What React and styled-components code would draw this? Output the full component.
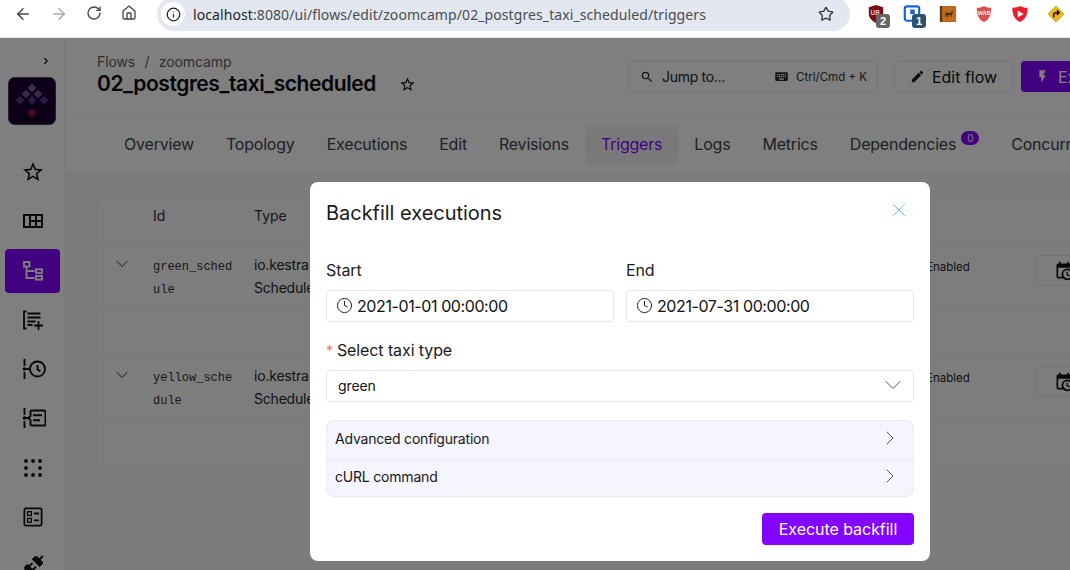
import React from "react";
import styled, { createGlobalStyle } from "styled-components";
import { ArrowLeft, ArrowRight, RotateCw, House, Info, Star, Clock, X, ChevronDown, ChevronRight } from "lucide-react";

const sans = `"Inter", "Liberation Sans", sans-serif`;

const Mdi = ({ d, size = 24, color = "currentColor" }) => (
  <svg width={size} height={size} viewBox="0 0 24 24" fill={color}>
    <path d={d} />
  </svg>
);

const paths = {
  star: "M12,15.39L8.24,17.66L9.23,13.38L5.91,10.5L10.29,10.13L12,6.09L13.71,10.13L18.09,10.5L14.77,13.38L15.76,17.66M22,9.24L14.81,8.63L12,2L9.19,8.63L2,9.24L7.45,13.97L5.82,21L12,17.27L18.18,21L16.54,13.97L22,9.24Z",
  pencil: "M20.71,7.04C21.1,6.65 21.1,6 20.71,5.63L18.37,3.29C18,2.9 17.35,2.9 16.96,3.29L15.12,5.12L18.87,8.87M3,17.25V21H6.75L17.81,9.93L14.06,6.18L3,17.25Z",
  magnify: "M9.5,3A6.5,6.5 0 0,1 16,9.5C16,11.11 15.41,12.59 14.44,13.73L14.71,14H15.5L20.5,19L19,20.5L14,15.5V14.71L13.73,14.44C12.59,15.41 11.11,16 9.5,16A6.5,6.5 0 0,1 3,9.5A6.5,6.5 0 0,1 9.5,3M9.5,5C7,5 5,7 5,9.5C5,12 7,14 9.5,14C12,14 14,12 14,9.5C14,7 12,5 9.5,5Z",
  keyboard: "M19,10H17V8H19M19,13H17V11H19M16,10H14V8H16M16,13H14V11H16M16,17H8V15H16M7,10H5V8H7M7,13H5V11H7M8,11H10V13H8M8,8H10V10H8M11,11H13V13H11M11,8H13V10H11M20,5H4C2.89,5 2,5.89 2,7V17A2,2 0 0,0 4,19H20A2,2 0 0,0 22,17V7C22,5.89 21.1,5 20,5Z",
  flash: "M7,2V13H10V22L17,10H13L17,2H7Z",
  calendarClock: "M15,13H16.5V15.82L18.94,17.23L18.19,18.53L15,16.69V13M19,8H5V19H9.67C9.24,18.09 9,17.07 9,16A7,7 0 0,1 16,9C17.07,9 18.09,9.24 19,9.67V8M5,21C3.89,21 3,20.1 3,19V5C3,3.89 3.89,3 5,3H6V1H8V3H16V1H18V3H19A2,2 0 0,1 21,5V11.1C22.24,12.36 23,14.09 23,16A7,7 0 0,1 16,23C14.09,23 12.36,22.24 11.1,21H5M16,11.15A4.85,4.85 0 0,0 11.15,16C11.15,18.68 13.32,20.85 16,20.85A4.85,4.85 0 0,0 20.85,16C20.85,13.32 18.68,11.15 16,11.15Z",
};

const DashboardIcon = () => (
  <svg width="20" height="14" viewBox="0 0 20 14" fill="currentColor">
    <path fillRule="evenodd" d="M0 0h20v14H0zM2 2v10h4V2zM8 2v4h4V2zM8 8v4h4V8zM14 2v4h4V2zM14 8v4h4V8z" />
    <rect x="9" y="6" width="2" height="2" />
  </svg>
);

const TreeIcon = () => (
  <svg width="20" height="20" viewBox="0 0 20 20" fill="none" stroke="currentColor" strokeWidth="1.9">
    <rect x="1" y="1" width="5.5" height="4.5" />
    <rect x="13" y="8.3" width="6" height="3.6" />
    <rect x="13" y="15" width="6" height="3.6" />
    <path d="M3.5 6v11h8M3.5 10h8" />
  </svg>
);

const ListPlusIcon = () => (
  <svg width="20" height="20" viewBox="0 0 20 20" fill="none" stroke="currentColor" strokeWidth="1.8">
    <path d="M3.5 18.5H1V1.5h2.5M4.5 3.5h13M4.5 7.5h13M4.5 11.5h8M4.5 15h5M15.5 11v9M11 15.5h9" />
  </svg>
);

const TimelineClockIcon = () => (
  <svg width="26" height="26" viewBox="0 0 26 26" fill="none" stroke="currentColor" strokeWidth="1.9">
    <path d="M4.5 3v7M4.5 16v7" />
    <circle cx="4.5" cy="13" r="1.8" fill="currentColor" stroke="none" />
    <path d="M6 13h3" />
    <circle cx="17.5" cy="13" r="7.5" />
    <path d="M17.5 9v4.4l3 2" />
  </svg>
);

const TimelineTextIcon = () => (
  <svg width="26" height="26" viewBox="0 0 26 26" fill="none" stroke="currentColor" strokeWidth="1.9">
    <path d="M4.5 3v7M4.5 16v7" />
    <circle cx="4.5" cy="13" r="1.8" fill="currentColor" stroke="none" />
    <path d="M6 13h2.5l2-2V6.5a1 1 0 0 1 1-1h13a1 1 0 0 1 1 1V19.5a1 1 0 0 1-1 1h-13a1 1 0 0 1-1-1V15l-2-2" />
    <path d="M13 10.2h9M13 15.2h7" />
  </svg>
);

const DotsIcon = () => (
  <svg width="24" height="24" viewBox="0 0 24 24" fill="currentColor">
    {[5, 12, 19].flatMap((y) => [5, 12, 19].map((x) => (x === 12 && y === 12 ? null : <circle key={`${x}-${y}`} cx={x} cy={y} r="1.9" />)))}
  </svg>
);

const BallotIcon = () => (
  <svg width="24" height="24" viewBox="0 0 24 24" fill="none" stroke="currentColor" strokeWidth="1.8">
    <rect x="3.4" y="3.4" width="17.2" height="17.2" rx="1.4" />
    <rect x="6.6" y="6.6" width="3.8" height="3.8" strokeWidth="1.3" />
    <rect x="6.6" y="13.4" width="3.8" height="3.8" strokeWidth="1.3" />
    <path d="M13 8.5h5M13 15.3h5" />
  </svg>
);

const ConnectionIcon = () => (
  <svg width="24" height="24" viewBox="0 0 24 24" fill="currentColor">
    <path d="M21.4 7.5c.8.8.8 2.1 0 2.8l-2.8 2.8-7.8-7.8 2.8-2.8c.7-.8 2-.8 2.8 0l1.8 1.8 3-3 1.4 1.4-3 3 1.8 1.8zm-5.8 5.8-1.4-1.4-2.8 2.8-2.1-2.1 2.8-2.8-1.4-1.4-2.8 2.8-1.5-1.4-2.8 2.8c-.8.8-.8 2.1 0 2.8l1.8 1.8-4 4 1.4 1.4 4-4 1.8 1.8c.8.8 2 .8 2.8 0l2.8-2.8-1.4-1.4 2.8-2.8z" />
  </svg>
);

const Logo = () => (
  <svg width="48" height="48" viewBox="0 0 48 48">
    <rect x="0.5" y="0.5" width="47" height="47" rx="6" fill="#17002f" stroke="#4a3b5c" />
    <path d="M24 6.5l4.5 4.5-4.5 4.5-4.5-4.5z" fill="#7b5f95" />
    <path d="M18 12.5l4.5 4.5-4.5 4.5-4.5-4.5zM30 12.5l4.5 4.5-4.5 4.5-4.5-4.5z" fill="#6f4b98" />
    <path d="M12 19l4.3 4.3-4.3 4.3-4.3-4.3zM24 19l4.3 4.3-4.3 4.3-4.3-4.3zM36 19l4.3 4.3-4.3 4.3-4.3-4.3z" fill="#5f3392" />
    <circle cx="24" cy="36" r="3.8" fill="#8f1c46" />
  </svg>
);

const UBlockIcon = () => (
  <svg width="18" height="18" viewBox="0 0 20 20">
    <path d="M10 0l8 2.4v7c0 5-3.4 8-8 10.6-4.6-2.6-8-5.6-8-10.6v-7z" fill="#7b0d14" />
    <text x="4" y="11" fontSize="7" fontWeight="700" fill="#e9d0d0" fontFamily="Liberation Sans">UB</text>
  </svg>
);

const BitIcon = () => (
  <svg width="18" height="18" viewBox="0 0 20 20" fill="none">
    <rect x="2" y="1.5" width="16" height="16" rx="2.5" stroke="#1a5fe0" strokeWidth="2.4" />
    <rect x="8" y="5" width="5" height="5" fill="#1a5fe0" />
  </svg>
);

const BookIcon = () => (
  <svg width="18" height="18" viewBox="0 0 20 20">
    <rect x="1" y="1" width="18" height="18" rx="1" fill="#bd6c1f" />
    <rect x="1" y="1" width="2.5" height="18" fill="#5b3a18" />
    <path d="M7 13V9l2-1 1 1h3l1-2h1l.5 2-1 1v3h-1v-2h-3v2H9v-2l-1 .5V13z" fill="#4f2c0c" />
  </svg>
);

const WabIcon = () => (
  <svg width="18" height="18" viewBox="0 0 20 20">
    <path d="M10 1c2.5 1.5 5 2 8 2 0 7-1.5 13-8 16-6.5-3-8-9-8-16 3 0 5.5-.5 8-2z" fill="#d9504f" />
    <text x="10" y="11.5" fontSize="6" fontWeight="700" textAnchor="middle" fill="#fbe9e9" fontFamily="Liberation Sans">WAB</text>
  </svg>
);

const PlayShieldIcon = () => (
  <svg width="18" height="18" viewBox="0 0 20 20">
    <path d="M10 1c2.5 1.500 5.500 2 8.500 2 0 8-2.500 13-8.500 16-6-3-8.500-8-8.500-16 3 0 6-.5 8.500-2z" fill="#ef1c2d" />
    <path d="M7.5 6l6.5 4-6.500 4z" fill="#fff" />
  </svg>
);

const RoadSignIcon = () => (
  <svg width="18" height="18" viewBox="0 0 20 20">
    <path d="M10 1l9 9-9 9-9-9z" fill="#f3b61f" stroke="#a97a0b" strokeWidth="0.6" />
    <path d="M7.5 14v-3.500c0-1.500 1-2 2.500-2h2M11 6l2.500 2.500L11 11" fill="none" stroke="#1b1203" strokeWidth="1.7" />
  </svg>
);

const GlobalStyle = createGlobalStyle`
  html, body {
    margin: 0;
    height: 100%;
    overflow: hidden;
    background: #fff;
  }
  * {
    box-sizing: border-box;
  }
`;

const Page = styled.div`
  position: relative;
  width: 1070px;
  height: 570px;
  overflow: hidden;
  font-family: ${sans};
  display: flex;
  flex-direction: column;
`;

const BrowserBar = styled.div`
  height: 38px;
  flex: none;
  display: flex;
  overflow: hidden;
  background: #fff;
  border-bottom: 1px solid #e8eaed;
`;

const NavButtons = styled.div`
  width: 157px;
  flex: none;
  display: flex;
  padding: 5px 0 0 14px;
  color: #474747;
`;

const NavButton = styled.span`
  width: 36px;
  height: 20px;
  display: flex;
  color: ${(props) => (props.$off ? "#a9abae" : "#474747")};
`;

const Omnibox = styled.div`
  width: 693px;
  height: 34px;
  margin-top: -3px;
  flex: none;
  display: flex;
  align-items: center;
  background: #e3e7ef;
  border-radius: 17px;
  padding: 0 16px 0 4px;
`;

const InfoBubble = styled.span`
  width: 24px;
  height: 24px;
  flex: none;
  display: flex;
  align-items: center;
  justify-content: center;
  border-radius: 50%;
  background: #fff;
  color: #1f1f1f;
`;

const Url = styled.div`
  flex: 1;
  margin-left: 8px;
  font: 14px "Noto Sans", sans-serif;
  letter-spacing: 0.09px;
  color: #4a4d51;
  white-space: nowrap;
  b {
    font-weight: 400;
    color: #1f1f1f;
  }
`;

const Extensions = styled.div`
  display: flex;
  padding-left: 8px;
`;

const Extension = styled.span`
  position: relative;
  width: 36px;
  height: 30px;
  padding-top: 5px;
  display: flex;
  justify-content: center;
`;

const ExtBadge = styled.span`
  position: absolute;
  top: 14px;
  left: 18px;
  width: 14px;
  height: 14px;
  border-radius: 3px;
  background: ${(props) => props.$bg};
  color: #fff;
  font: 700 11px/14px "Liberation Sans", sans-serif;
  text-align: center;
`;

const Body = styled.div`
  flex: 1;
  display: flex;
  min-height: 0;
`;

const Sidebar = styled.aside`
  width: 65px;
  flex: none;
  background: #fff;
  border-right: 1px solid #f0f0f2;
  padding: 12px 4px 0 5px;
  overflow: hidden;
`;

const Collapse = styled.div`
  height: 15px;
  padding-left: 36px;
  color: #111;
`;

const LogoWrap = styled.div`
  margin: 12px 0 0 3px;
  height: 48px;
`;

const SideNav = styled.nav`
  display: flex;
  flex-direction: column;
  gap: 5.3px;
  margin-top: 25px;
`;

const SideItem = styled.div`
  width: 55px;
  height: 44px;
  flex: none;
  display: flex;
  align-items: center;
  justify-content: center;
  border-radius: 4px;
  background: ${(props) => (props.$active ? "#8405ff" : "transparent")};
  color: ${(props) => (props.$active ? "#fff" : "#111")};
`;

const Main = styled.main`
  flex: 1;
  min-width: 0;
  display: flex;
  flex-direction: column;
  background: #f9f9fb;
`;

const Header = styled.header`
  height: 79px;
  flex: none;
  display: flex;
  padding: 15px 0 0 32px;
  background: #fff;
  border-bottom: 1px solid #f0f0f2;
`;

const TitleBlock = styled.div`
  width: 531px;
  flex: none;
`;

const Crumbs = styled.div`
  font-size: 14px;
  line-height: 18px;
  color: #5f5f64;
  letter-spacing: -0.1px;
  word-spacing: 5.5px;
`;

const TitleRow = styled.div`
  display: flex;
  align-items: center;
  gap: 23px;
  margin-top: -1px;
`;

const Title = styled.h1`
  margin: 0;
  font-size: 21px;
  line-height: 28px;
  font-weight: 600;
  color: #0a0a0a;
  letter-spacing: -0.42px;
`;

const Actions = styled.div`
  display: flex;
  flex: none;
  height: 31px;
  margin-top: 8px;
`;

const JumpBox = styled.div`
  width: 250px;
  display: flex;
  align-items: center;
  padding: 0 10px 0 11px;
  border: 1px solid #eaeaee;
  border-radius: 4px;
  color: #27272a;
  font-size: 14px;
  letter-spacing: -0.3px;
`;

const JumpText = styled.span`
  margin-left: 8px;
  flex: 1;
`;

const Keys = styled.span`
  margin-left: 7px;
  font-size: 11.5px;
  letter-spacing: 0;
  color: #333;
`;

const EditButton = styled.div`
  margin-left: 16px;
  width: 119px;
  display: flex;
  align-items: center;
  justify-content: center;
  gap: 7px;
  border: 1px solid #eaeaee;
  border-radius: 4px;
  font-size: 16px;
  color: #111;
`;

const ExecuteButton = styled.div`
  margin-left: 8px;
  width: 110px;
  flex: none;
  display: flex;
  align-items: center;
  gap: 8px;
  padding-left: 14px;
  border-radius: 4px;
  background: #8405ff;
  color: #fff;
  font-size: 16px;
`;

const Tabs = styled.div`
  height: 56px;
  flex: none;
  display: flex;
  padding: 8px 0 0 43px;
  background: #fff;
  border-bottom: 1px solid #f0f0f2;
  white-space: nowrap;
`;

const Tab = styled.div`
  height: 40px;
  flex: none;
  display: flex;
  align-items: center;
  padding: 0 16px 3px;
  border-radius: 6px;
  font-size: 16px;
  letter-spacing: -0.2px;
  color: ${(props) => (props.$active ? "#8405ff" : "#424247")};
  background: ${(props) => (props.$active ? "#f3f3f5" : "transparent")};
`;

const CountBadge = styled.span`
  width: 18px;
  height: 14px;
  margin: -11px 0 0 5px;
  border-radius: 8px;
  background: #8405ff;
  color: #fff;
  font-size: 10px;
  line-height: 14px;
  text-align: center;
`;

const Content = styled.div`
  flex: 1;
  padding: 23px 0 0 32px;
`;

const Table = styled.div`
  width: 1100px;
  height: 274px;
  border: 1px solid #f0f0f2;
  border-radius: 8px;
  background: #fafafc;
`;

const HeaderRow = styled.div`
  height: 50px;
  display: grid;
  grid-template-columns: 55px 101px 672px 110px 1fr;
  padding-top: 10px;
  border-bottom: 1px solid #eeeef0;
  font-size: 14px;
  color: #333;
`;

const Row = styled.div`
  height: 62px;
  display: grid;
  grid-template-columns: 55px 101px 672px 110px 1fr;
  padding-top: 8px;
  border-bottom: 1px solid #eeeef0;
`;

const Spacer = styled.div`
  height: 49px;
  border-bottom: ${(props) => (props.$last ? "none" : "1px solid #eeeef0")};
`;

const Chevron = styled.div`
  padding-left: 14px;
  height: 20px;
  margin-top: -1px;
  color: #333;
`;

const IdCell = styled.div`
  width: 84px;
  padding-top: 1px;
  font: 12px/23px "Liberation Mono", monospace;
  color: #333;
  word-break: break-all;
`;

const TypeCell = styled.div`
  width: 56px;
  margin-top: -2px;
  overflow: hidden;
  font-size: 14px;
  line-height: 23px;
  color: #27272a;
  white-space: nowrap;
  letter-spacing: -0.2px;
`;

const StateCell = styled.div`
  font-size: 11.5px;
  line-height: 23px;
  padding-top: 1px;
  color: #222;
`;

const CalendarButton = styled.div`
  width: 64px;
  height: 31px;
  display: flex;
  align-items: center;
  padding-left: 17px;
  border: 1px solid #eaeaee;
  border-radius: 4px;
  color: #111;
`;

const Overlay = styled.div`
  position: absolute;
  inset: 38px 0 0 0;
  padding: 144px 0 0 310px;
  background: rgba(0, 0, 0, 0.5);
`;

const Modal = styled.div`
  width: 620px;
  height: 379px;
  padding: 16px;
  background: #fff;
  border-radius: 8px;
  color: #111;
`;

const ModalHead = styled.div`
  height: 30px;
  display: flex;
  align-items: center;
  justify-content: space-between;
  padding-right: 4px;
`;

const ModalTitle = styled.h2`
  margin: 0;
  font-size: 20px;
  font-weight: 400;
  letter-spacing: -0.03px;
  color: #1a1a1c;
`;

const CloseIcon = styled.span`
  display: flex;
  margin-top: -6px;
  color: #4fbdf0;
`;

const DateGrid = styled.div`
  display: grid;
  grid-template-columns: 288px 288px;
  gap: 12px;
  margin-top: 30px;
`;

const Label = styled.label`
  display: block;
  height: 32px;
  padding-top: 2px;
  font-size: 16px;
  line-height: 20px;
  letter-spacing: -0.1px;
  color: #1a1a1c;
`;

const Required = styled.span`
  color: #f56c6c;
  font-size: 14px;
  margin-right: 4px;
`;

const Field = styled.div`
  height: 32px;
  display: flex;
  align-items: center;
  gap: 4px;
  padding: 0 9px 1px;
  border: 1px solid #e8e8ec;
  border-radius: 3px;
  font-size: 16px;
  letter-spacing: -0.4px;
  color: #111;
`;

const SelectBlock = styled.div`
  margin-top: 16px;
`;

const SelectField = styled(Field)`
  justify-content: space-between;
  font-size: 14px;
  letter-spacing: -0.1px;
  padding: 0 6px 2px 11px;
  svg {
    color: #444;
  }
`;

const Accordion = styled.div`
  margin-top: 18px;
  border: 1px solid #e9e9f0;
  border-radius: 8px;
  background: #f5f5fd;
`;

const AccordionRow = styled.div`
  height: 37.5px;
  display: flex;
  align-items: center;
  justify-content: space-between;
  padding: 0 11px 3px 8px;
  font-size: 14px;
  letter-spacing: -0.2px;
  color: #18181b;
  svg {
    color: #444;
  }
  & + & {
    border-top: 1px solid #e9e9f0;
  }
`;

const ModalFoot = styled.div`
  display: flex;
  justify-content: flex-end;
  margin-top: 16px;
`;

const PrimaryButton = styled.button`
  width: 152px;
  height: 32px;
  border: 0;
  border-radius: 4px;
  background: #8405ff;
  color: #fff;
  font: 16px ${sans};
  letter-spacing: -0.05px;
`;

const triggers = [
  { id: "green_schedule" },
  { id: "yellow_schedule" },
];

const tabs = ["Overview", "Topology", "Executions", "Edit", "Revisions", "Triggers", "Logs", "Metrics", "Dependencies", "Concurrency"];

const sideIcons = [
  <Mdi key="star" d={paths.star} />,
  <DashboardIcon key="dash" />,
  <TreeIcon key="tree" />,
  <ListPlusIcon key="list" />,
  <TimelineClockIcon key="clock" />,
  <TimelineTextIcon key="text" />,
  <DotsIcon key="dots" />,
  <BallotIcon key="ballot" />,
  <ConnectionIcon key="conn" />,
];

const App = () => {
  return (
    <Page>
      <GlobalStyle />
      <BrowserBar>
        <NavButtons>
          <NavButton><ArrowLeft size={18} /></NavButton>
          <NavButton $off><ArrowRight size={18} /></NavButton>
          <NavButton><RotateCw size={16} /></NavButton>
          <NavButton><House size={16} /></NavButton>
        </NavButtons>
        <Omnibox>
          <InfoBubble><Info size={15} /></InfoBubble>
          <Url><b>localhost</b>:8080/ui/flows/edit/zoomcamp/02_postgres_taxi_scheduled/triggers</Url>
          <Star size={16} color="#333" />
        </Omnibox>
        <Extensions>
          <Extension><UBlockIcon /><ExtBadge $bg="#666">2</ExtBadge></Extension>
          <Extension><BitIcon /><ExtBadge $bg="#2a5270">1</ExtBadge></Extension>
          <Extension><BookIcon /></Extension>
          <Extension><WabIcon /></Extension>
          <Extension><PlayShieldIcon /></Extension>
          <Extension><RoadSignIcon /></Extension>
        </Extensions>
      </BrowserBar>
      <Body>
        <Sidebar>
          <Collapse><ChevronRight size={10} strokeWidth={3} /></Collapse>
          <LogoWrap><Logo /></LogoWrap>
          <SideNav>
            {sideIcons.map((icon, i) => (
              <SideItem key={i} $active={i === 2}>{icon}</SideItem>
            ))}
          </SideNav>
        </Sidebar>
        <Main>
          <Header>
            <TitleBlock>
              <Crumbs>Flows / zoomcamp</Crumbs>
              <TitleRow>
                <Title>02_postgres_taxi_scheduled</Title>
                <Mdi d={paths.star} size={17} color="#111" />
              </TitleRow>
            </TitleBlock>
            <Actions>
              <JumpBox>
                <Mdi d={paths.magnify} size={14} />
                <JumpText>Jump to...</JumpText>
                <Mdi d={paths.keyboard} size={15} />
                <Keys>Ctrl/Cmd + K</Keys>
              </JumpBox>
              <EditButton><Mdi d={paths.pencil} size={15} />Edit flow</EditButton>
              <ExecuteButton><Mdi d={paths.flash} size={15} />Execute</ExecuteButton>
            </Actions>
          </Header>
          <Tabs>
            {tabs.map((tab) => (
              <Tab key={tab} $active={tab === "Triggers"}>
                {tab}
                {tab === "Dependencies" && <CountBadge>0</CountBadge>}
              </Tab>
            ))}
          </Tabs>
          <Content>
            <Table>
              <HeaderRow>
                <span />
                <span>Id</span>
                <span>Type</span>
              </HeaderRow>
              {triggers.map((t, i) => (
                <React.Fragment key={t.id}>
                  <Row>
                    <Chevron><ChevronDown size={20} strokeWidth={1.2} /></Chevron>
                    <IdCell>{t.id}</IdCell>
                    <TypeCell>io.kestra.plugin.core.trigger.<br />Schedule</TypeCell>
                    <StateCell>Enabled</StateCell>
                    <CalendarButton><Mdi d={paths.calendarClock} size={20} /></CalendarButton>
                  </Row>
                  <Spacer $last={i === triggers.length - 1} />
                </React.Fragment>
              ))}
            </Table>
          </Content>
        </Main>
      </Body>
      <Overlay>
        <Modal>
          <ModalHead>
            <ModalTitle>Backfill executions</ModalTitle>
            <CloseIcon><X size={22} strokeWidth={1} /></CloseIcon>
          </ModalHead>
          <DateGrid>
            <div>
              <Label>Start</Label>
              <Field><Clock size={17} strokeWidth={1.3} />2021-01-01 00:00:00</Field>
            </div>
            <div>
              <Label>End</Label>
              <Field><Clock size={17} strokeWidth={1.3} />2021-07-31 00:00:00</Field>
            </div>
          </DateGrid>
          <SelectBlock>
            <Label><Required>*</Required>Select taxi type</Label>
            <SelectField>green<ChevronDown size={28} strokeWidth={0.8} /></SelectField>
          </SelectBlock>
          <Accordion>
            <AccordionRow>Advanced configuration<ChevronRight size={24} strokeWidth={0.9} /></AccordionRow>
            <AccordionRow>cURL command<ChevronRight size={24} strokeWidth={0.9} /></AccordionRow>
          </Accordion>
          <ModalFoot>
            <PrimaryButton>Execute backfill</PrimaryButton>
          </ModalFoot>
        </Modal>
      </Overlay>
    </Page>
  );
};

export default App;
